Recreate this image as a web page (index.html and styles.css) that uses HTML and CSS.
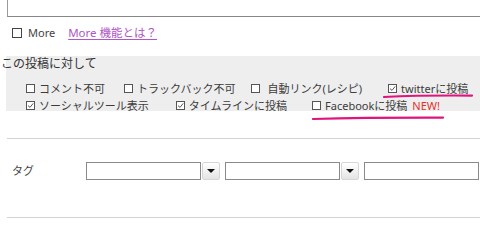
FILE: index.html
```html
<!DOCTYPE html>
<html lang="ja">
<head>
<meta charset="utf-8">
<link rel="stylesheet" href="styles.css">
</head>
<body>
<div class="editor"></div>
<div class="more-row">
  <span class="cb cb-more"></span>
  <span class="more-text">More</span>
  <a class="more-link" href="#">More 機能とは？</a>
</div>
<div class="options">
  <div class="options-title">この投稿に対して</div>
  <div class="opt-row first">
    <span class="opt"><span class="cb"></span>コメント不可</span>
    <span class="opt trackback"><span class="cb"></span>トラックバック不可</span>
    <span class="opt autolink"><span class="cb"></span>自動リンク(レシピ)</span>
    <span class="opt twitter"><span class="cb"><svg viewBox="0 0 7 7" class="tick"><path d="M1 3.6 L3 5.4 L6.2 1.4"/></svg></span>twitterに投稿<svg class="mark mark-tw" viewBox="0 0 94 6"><path d="M2 4 Q 40 2.2 92 2.6"/></svg></span>
  </div>
  <div class="opt-row second">
    <span class="opt"><span class="cb"><svg viewBox="0 0 7 7" class="tick"><path d="M1 3.6 L3 5.4 L6.2 1.4"/></svg></span>ソーシャルツール表示</span>
    <span class="opt timeline"><span class="cb"><svg viewBox="0 0 7 7" class="tick"><path d="M1 3.6 L3 5.4 L6.2 1.4"/></svg></span>タイムラインに投稿</span>
    <span class="opt facebook"><span class="cb"></span>Facebookに投稿<span class="new">NEW!</span><svg class="mark mark-fb" viewBox="0 0 138 6"><path d="M2 4 Q 60 2.4 136 2.6"/></svg></span>
  </div>
</div>
<div class="tag-sec">
  <div class="tag-label">タグ</div>
  <div class="fields">
    <div class="field"><span class="tinput"></span><span class="dd"><span class="tri"></span></span></div>
    <div class="field"><span class="tinput"></span><span class="dd"><span class="tri"></span></span></div>
    <div class="field"><span class="tinput"></span></div>
  </div>
</div>
</body>
</html>
```
FILE: styles.css
```css
html, body {
  margin: 0;
  padding: 0;
}
body {
  width: 480px;
  height: 218px;
  overflow: hidden;
  background: #fff;
  color: #3c3c3c;
  font-family: "Noto Sans", "Noto Sans CJK JP", sans-serif;
  font-size: 11px;
}
.editor {
  margin-left: 7px;
  height: 16px;
  border-left: 1px solid #9a9a9a;
  border-bottom: 1px solid #888;
}
.more-row {
  display: flex;
  align-items: center;
  height: 22px;
  margin-top: 5px;
  padding-left: 12px;
  line-height: 14px;
}
.cb {
  display: inline-flex;
  align-items: center;
  justify-content: center;
  flex: none;
  width: 7px;
  height: 7px;
  border: 1px solid #555;
  background: #fff;
}
.cb-more {
  width: 8px;
  height: 8px;
  border-color: #444;
}
.tick {
  width: 7px;
  height: 7px;
  display: block;
}
.tick path {
  fill: none;
  stroke: #555;
  stroke-width: 1;
}
.more-text {
  margin-left: 6px;
  color: #444;
}
.more-link {
  margin-left: 13px;
  font-size: 11.5px;
  color: #b155c6;
  text-decoration: underline;
  text-underline-offset: 2px;
}
.options {
  margin-top: 12px;
  margin-left: 6px;
  height: 55px;
  background: #eeeeee;
}
.options-title {
  margin-left: -5px;
  font-size: 12px;
  line-height: 15px;
  color: #333;
}
.opt-row {
  display: flex;
  align-items: center;
  padding-left: 20px;
  height: 17px;
  line-height: 15px;
}
.opt-row.first {
  margin-top: 9px;
}
.opt {
  position: relative;
  display: flex;
  align-items: center;
  white-space: nowrap;
}
.opt .cb {
  margin-right: 4px;
}
.opt.trackback {
  margin-left: 19px;
}
.opt.autolink {
  margin-left: 16px;
}
.opt.autolink .cb {
  margin-right: 7px;
}
.opt.twitter {
  margin-left: 26px;
}
.opt.timeline {
  margin-left: 27px;
}
.opt.facebook {
  margin-left: 25px;
}
.new {
  margin-left: 5px;
  color: #e4302c;
}
.mark {
  position: absolute;
  overflow: visible;
}
.mark path {
  fill: none;
  stroke: #e0147c;
  stroke-width: 2.2;
  stroke-linecap: round;
}
.mark-tw {
  left: -6px;
  top: 12px;
  width: 92px;
  height: 6px;
}
.mark-fb {
  left: -1px;
  top: 17px;
  width: 134px;
  height: 6px;
}
.tag-sec {
  box-sizing: border-box;
  display: flex;
  align-items: flex-start;
  margin-top: 27px;
  margin-left: 7px;
  height: 80px;
  padding-top: 23px;
  border-top: 1px solid #d2d2d2;
  border-bottom: 1px solid #d2d2d2;
}
.tag-label {
  box-sizing: border-box;
  width: 79px;
  padding-left: 5px;
  line-height: 18px;
  color: #444;
}
.fields {
  display: flex;
  gap: 5px;
}
.field {
  display: flex;
  gap: 1px;
}
.tinput {
  display: block;
  width: 113px;
  height: 16px;
  border: 1px solid #8a8a8a;
  background: #fff;
}
.dd {
  display: flex;
  align-items: center;
  justify-content: center;
  width: 16px;
  height: 16px;
  border: 1px solid #d6d6d6;
  border-radius: 2px;
  background: linear-gradient(#ffffff, #e4e4e4);
}
.tri {
  width: 0;
  height: 0;
  border-left: 4px solid transparent;
  border-right: 4px solid transparent;
  border-top: 4px solid #111;
}
```
